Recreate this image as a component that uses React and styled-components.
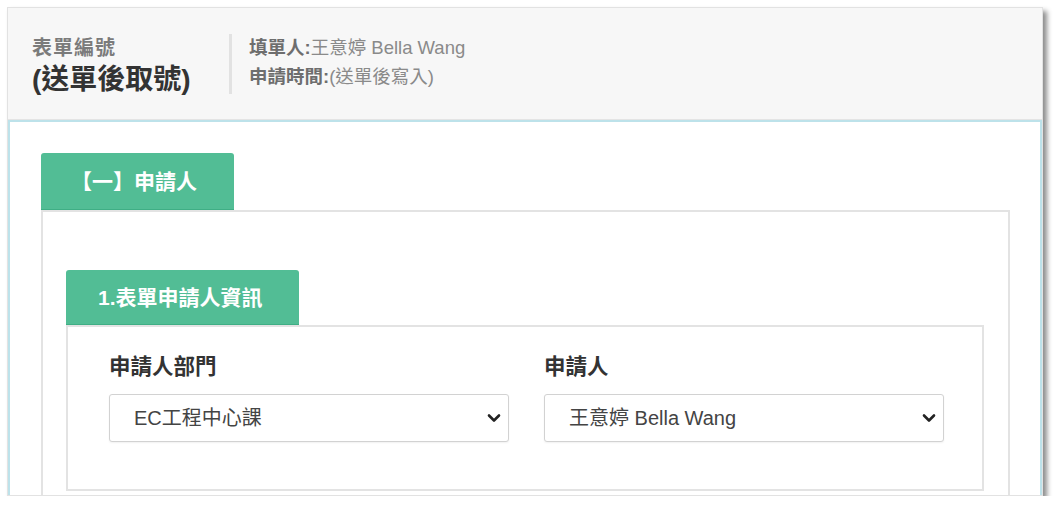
import React from "react";
import styled, { createGlobalStyle } from "styled-components";

const Global = createGlobalStyle`
  html, body { margin: 0; padding: 0; background: #fff; }
  body { font-family: "Liberation Sans", Arial, "Noto Sans CJK TC", sans-serif; }
  * { box-sizing: border-box; }
`;

const Window = styled.div`
  margin: 7px 0 0 7px;
  width: 1036px;
  height: 489px;
  overflow: hidden;
  background: #fff;
  border: 1px solid #e2e2e2;
  box-shadow: 4px 4px 5px rgba(0, 0, 0, 0.45);
  display: flex;
  flex-direction: column;
`;

const Header = styled.header`
  height: 112px;
  flex: none;
  background: #f7f7f7;
  border-bottom: 1px solid #e4e4e4;
  display: flex;
  align-items: center;
  padding-left: 24px;
`;

const FormNo = styled.div`
  width: 197px;
  display: flex;
  flex-direction: column;
  margin-top: 6px;
`;

const FormNoLabel = styled.div`
  font-size: 20px;
  font-weight: 700;
  color: #7b7b7b;
  line-height: 26px;
  letter-spacing: 1px;
`;

const FormNoValue = styled.div`
  font-size: 28px;
  font-weight: 700;
  color: #333;
  line-height: 36px;
  margin-top: 1px;
`;

const Divider = styled.div`
  width: 3px;
  height: 60px;
  background: #e2e2e2;
  margin-right: 17px;
`;

const Info = styled.div`
  display: flex;
  flex-direction: column;
  gap: 5px;
  margin-top: -2px;
`;

const InfoRow = styled.div`
  font-size: 18.5px;
  line-height: 24px;
  color: #8a8a8a;
`;

const InfoKey = styled.span`
  font-weight: 700;
  color: #6e6e6e;
`;

const Body = styled.main`
  flex: 1;
  border: 2px solid #bde2ea;
  border-bottom: none;
  padding: 31px 30px 0 31px;
  display: flex;
  flex-direction: column;
`;

const Tab = styled.div`
  align-self: flex-start;
  width: ${(p) => p.$w}px;
  height: ${(p) => p.$h}px;
  background: #52bd95;
  border-radius: 3px 3px 0 0;
  border-bottom: 1px solid #3fae85;
  color: #fff;
  font-weight: 700;
  font-size: 21px;
  display: flex;
  align-items: center;
  padding-left: ${(p) => p.$pad}px;
  padding-bottom: 2px;
`;

const Panel = styled.section`
  flex: ${(p) => (p.$open ? 1 : "none")};
  border: 2px solid #e3e3e3;
  border-bottom: ${(p) => (p.$open ? "none" : "2px solid #e3e3e3")};
  padding: ${(p) => p.$pad};
  display: flex;
  flex-direction: column;
`;

const Fields = styled.div`
  display: grid;
  grid-template-columns: 400px 400px;
  column-gap: 35px;
`;

const Field = styled.div`
  display: flex;
  flex-direction: column;
`;

const Label = styled.label`
  font-size: 21.5px;
  font-weight: 700;
  color: #333;
  line-height: 28px;
  margin-bottom: 13px;
`;

const SelectWrap = styled.div`
  position: relative;
  height: 48px;
`;

const Select = styled.select`
  appearance: none;
  -webkit-appearance: none;
  width: 100%;
  height: 100%;
  border: 1px solid #d2d2d2;
  border-radius: 3px;
  background: #fff;
  box-shadow: 0 1px 2px rgba(0, 0, 0, 0.06);
  padding: 0 40px 0 24px;
  font-family: "Liberation Sans", Arial, "Noto Sans CJK TC", sans-serif;
  font-size: 20px;
  color: #444;
  outline: none;
`;

const Chevron = styled.svg`
  position: absolute;
  right: 8px;
  top: 19px;
  pointer-events: none;
`;

function Dropdown({ value }) {
  return (
    <SelectWrap>
      <Select defaultValue={value}>
        <option value={value}>{value}</option>
      </Select>
      <Chevron width="14" height="10" viewBox="0 0 14 10">
        <path d="M2 2.5 L7 7.5 L12 2.5" fill="none" stroke="#222" strokeWidth="2.6" strokeLinecap="round" strokeLinejoin="round" />
      </Chevron>
    </SelectWrap>
  );
}

export default function App() {
  return (
    <>
      <Global />
      <Window>
        <Header>
          <FormNo>
            <FormNoLabel>表單編號</FormNoLabel>
            <FormNoValue>(送單後取號)</FormNoValue>
          </FormNo>
          <Divider />
          <Info>
            <InfoRow>
              <InfoKey>填單人:</InfoKey>王意婷 Bella Wang
            </InfoRow>
            <InfoRow>
              <InfoKey>申請時間:</InfoKey>(送單後寫入)
            </InfoRow>
          </Info>
        </Header>
        <Body>
          <Tab $w={193} $h={57} $pad={30}>【一】申請人</Tab>
          <Panel $open $pad="58px 24px 0 23px">
            <Tab $w={233} $h={55} $pad={32}>1.表單申請人資訊</Tab>
            <Panel $pad="26px 40px 47px 41px">
              <Fields>
                <Field>
                  <Label>申請人部門</Label>
                  <Dropdown value="EC工程中心課" />
                </Field>
                <Field>
                  <Label>申請人</Label>
                  <Dropdown value="王意婷 Bella Wang" />
                </Field>
              </Fields>
            </Panel>
          </Panel>
        </Body>
      </Window>
    </>
  );
}
